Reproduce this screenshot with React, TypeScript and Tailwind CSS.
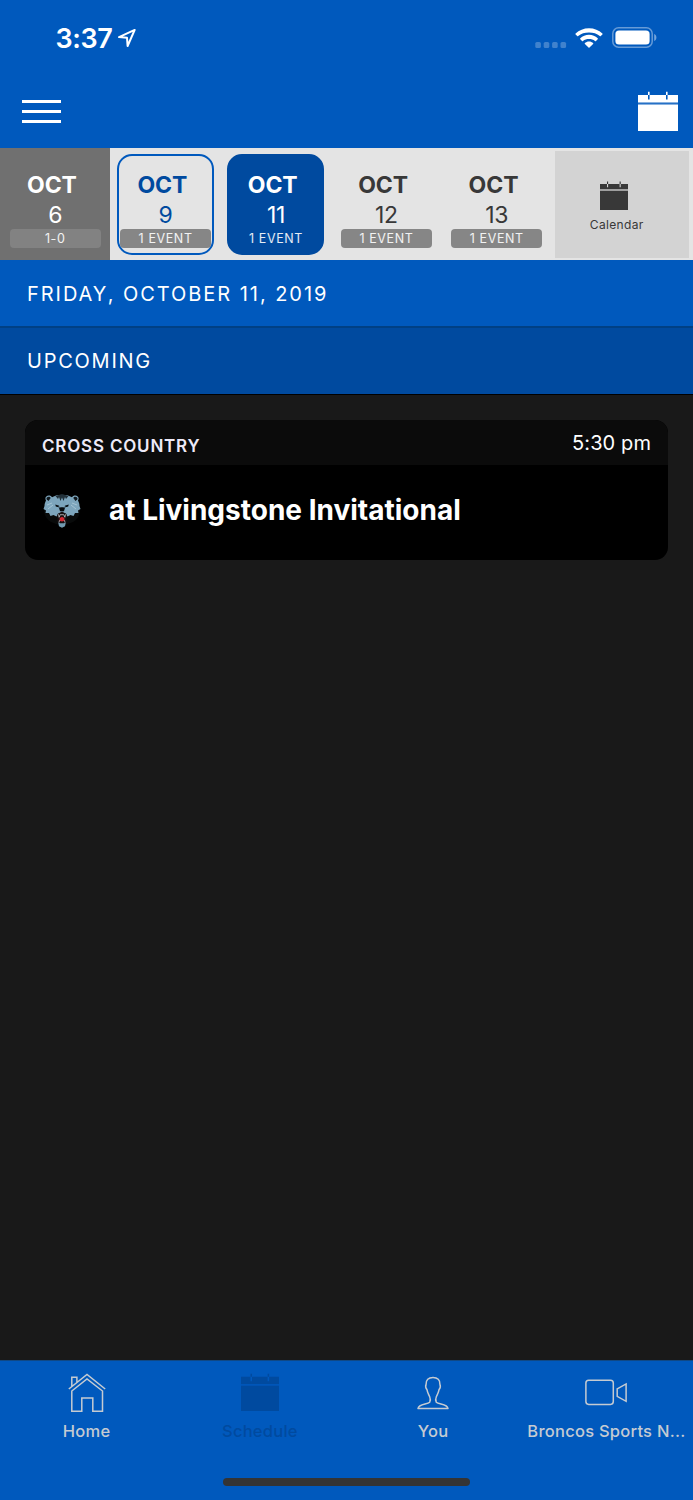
import type { ReactNode } from "react";
import clsx from "clsx";

type DayState = "past" | "today" | "selected" | "upcoming";

const days: { day: string; label: string; state: DayState }[] = [
  { day: "6", label: "1-0", state: "past" },
  { day: "9", label: "1 EVENT", state: "today" },
  { day: "11", label: "1 EVENT", state: "selected" },
  { day: "12", label: "1 EVENT", state: "upcoming" },
  { day: "13", label: "1 EVENT", state: "upcoming" },
];

const CalendarIcon = ({ className }: { className: string }) => (
  <svg viewBox="0 0 40 40" preserveAspectRatio="none" className={className} fill="currentColor">
    <path d="M0 4h10v4.600h1.600V4H28v4.600h1.600V4H40v7.500H0zM0 13.500h40V40H0z" />
    <path d="M10 .8h1.600V4H10zM28 .8h1.600V4H28z" />
    <path d="M0 11.500h40v2H0z" fillOpacity="0.15" />
  </svg>
);

const LocationIcon = () => (
  <svg viewBox="0 0 20 20" className="h-5 w-5" fill="none" stroke="currentColor" strokeWidth="2" strokeLinejoin="round">
    <path d="M17.700 1.900 2 9.100l8 .7.600 8.200z" />
  </svg>
);

const SignalDots = () => (
  <svg viewBox="0 0 32 6" className="h-1.5 w-8 text-white/25" fill="currentColor">
    <rect x="0.3" width="5.6" height="6" rx="1.6" />
    <rect x="8.7" width="5.6" height="6" rx="1.6" />
    <rect x="17.1" width="5.6" height="6" rx="1.6" />
    <rect x="25.5" width="5.6" height="6" rx="1.6" />
  </svg>
);

const WifiIcon = () => (
  <svg viewBox="0 0 28 20" className="h-5 w-7" fill="currentColor">
    <path d="M14 .2C8.8.2 4.100 2.200.6 5.500c-.3.300-.3.700 0 1L2.200 8.100c.3.300.7.300 1 0C6 5.400 9.800 4.400 14 4.400s8 1 10.800 3.700c.3.300.7.300 1 0l1.600-1.600c.3-.3.300-.7 0-1C23.900 2.200 19.200.2 14 .2z" />
    <path d="M14 6.800c-3.400 0-6.400 1.300-8.700 3.400-.3.300-.3.700 0 1l1.700 1.700c.3.300.7.300 1 0 1.600-1.400 3.700-1.900 6-1.900s4.400.5 6 1.900c.3.300.7.300 1 0l1.700-1.700c.3-.3.300-.7 0-1C20.400 8.100 17.400 6.800 14 6.800z" />
    <path d="M14 13.400c-1.600 0-3 .6-4.100 1.500-.3.300-.3.700 0 1l3.600 3.600c.3.300.7.300 1 0l3.600-3.600c.3-.3.300-.7 0-1-1.100-.9-2.500-1.500-4.100-1.500z" />
  </svg>
);

const BatteryIcon = () => (
  <svg viewBox="0 0 45 21" className="h-[21px] w-[45px]">
    <rect x="0.8" y="0.8" width="39.4" height="19.4" rx="5.800" fill="none" stroke="#fff" strokeOpacity="0.4" strokeWidth="1.5" />
    <rect x="3.4" y="3.400" width="34.200" height="14.200" rx="3.600" fill="#fff" />
    <path d="M42.200 7v7c1.300-.5 2.200-1.900 2.200-3.500S43.500 7.500 42.200 7z" fill="#fff" fillOpacity="0.45" />
  </svg>
);

const BearLogo = () => (
  <svg viewBox="0 0 38 34" className="h-[34px] w-[38px]">
    <path d="M1 16c0 8 6 14 18 15 12-1 18-7 18-15z" fill="#080a0a" />
    <path d="M3 6.500C1.500 4 3 1.500 5.800 1.500c1.500 0 2.500.6 3.200 1.700C12 1.500 15 .7 19 .7s7 .8 10 2.500c.7-1.100 1.700-1.700 3.200-1.700C35 1.500 36.500 4 35 6.500c1 2 1.500 3.500 1.500 5.500l1 3-2.500 1.500.5 2.500-3.500 0-1.500 3-3-1-3 1.500-2-3h-7l-2 3-3-1.500-3 1L6 19l-3.500 0 .5-2.500L.5 15l1-3c0-2 .5-3.500 1.500-5.500z" fill="#7da5bc" />
    <path d="M3.700 5.600c-.8-1.500.2-2.900 2-2.900 1 0 1.600.5 2 1.300L5.500 7zM34.300 5.600c.8-1.500-.2-2.900-2-2.900-1 0-1.600.5-2 1.300L32.500 7z" fill="#10181d" />
    <path d="m12.500 2 4-1.300h5l4 1.300-2.500 3-1-2-1.500 4L19 3.500 17.500 7 16 3l-1 2z" fill="#22313a" />
    <path d="m12.300 10.500 3.900 1.300-.7 1.500-2.700-.8zM25.700 10.500l-3.900 1.300.7 1.500 2.700-.8z" fill="#05090c" />
    <path d="m15.500 12 2 4m5-4-2 4" stroke="#2d414e" strokeWidth="1" fill="none" />
    <path d="m4 11 5-2m-4 6 5-4m24 0-5-2m4 6-5-4" stroke="#a9c6d6" strokeWidth="0.900" fill="none" />
    <path d="m16.300 14.300 1.200-1h3l1.200 1-.7 3h-4z" fill="#080b0e" />
    <path d="m14.500 20 4.500-2.500 4.500 2.500v8L21 31h-4l-2.500-3z" fill="#171012" />
    <path d="m15.500 20.300.6 3 1.100-2.600h3.600l1.100 2.600.6-3M16 28.500l.5-2.200h5l.5 2.200" stroke="#d5dbde" strokeWidth="0.700" fill="none" />
    <path d="m16.700 24 2.300-1.300 2.300 1.300v2.700l-2.300.9-2.300-.9z" fill="#d32832" />
    <path d="m15.200 28.500 2 .8h3.600l2-.8-.8 3.700-3 1.600-3-1.600z" fill="#7199af" />
  </svg>
);

const HomeIcon = () => (
  <svg viewBox="0 0 40 40" className="h-10 w-10" fill="none" stroke="currentColor" strokeWidth="1.5">
    <path d="M1.800 17 20 2.400 38.200 17M4.800 14.600V5.300h5.100v5.200M4.800 19v20.300h10V26h11v13.300h9.700V19L20 6.900z" />
  </svg>
);

const PersonIcon = () => (
  <svg viewBox="0 0 32 34" className="mt-0.5 h-[34px] w-8" fill="none" stroke="currentColor" strokeWidth="1.500" strokeLinejoin="round">
    <path d="M16 1.500c-4.700 0-7 2.600-6.900 6.700-.7 1.600-.3 4 .9 5.500.4 3 1.500 4.400 2.600 6.800.9 2 .9 4.100.1 5.700-2.200 2.400-11 1.600-11.700 6.300h30c-.7-4.700-9.500-3.900-11.700-6.300-.8-1.600-.8-3.700.1-5.700 1.100-2.400 2.200-3.800 2.600-6.800 1.200-1.500 1.600-3.900.9-5.500.1-4.100-2.200-6.700-6.900-6.700z" />
  </svg>
);

const VideoIcon = () => (
  <svg viewBox="0 0 42 27" className="mt-px h-[27px] w-[42px]" fill="none" stroke="currentColor" strokeWidth="1.500">
    <rect x="0.900" y="1.200" width="27.400" height="24.200" rx="2.800" />
    <path d="m32.200 9.800 8.900-4.900v17.400l-8.900-4.900z" />
  </svg>
);

const DayCell = ({ day, label, state }: (typeof days)[number]) => (
  <div className={clsx("flex w-[110.4px] shrink-0 justify-center pt-[6px]", state === "past" && "bg-[#707070]")}>
    <div
      className={clsx(
        "flex h-[101px] w-[97px] flex-col items-center rounded-[15px] border-2 pt-[15.5px]",
        state === "past" && "border-transparent text-white",
        state === "today" && "border-[#0059bd] text-[#004a9f]",
        state === "selected" && "border-[#004a9f] bg-[#004a9f] text-white",
        state === "upcoming" && "border-transparent text-[#383838]",
      )}
    >
      <span className="mr-[6.5px] text-[23px] leading-[28px] font-bold tracking-[-0.1px]">OCT</span>
      <span className="mt-[2px] text-[23px] leading-[28px] tracking-[-0.3px]">{day}</span>
      <span
        className={clsx(
          "h-[19px] w-[91px] shrink-0 rounded-[4px] text-center text-[12.5px] leading-[19px] tracking-[0.6px] text-white/90",
          state === "past" && "bg-[#828282]",
          (state === "today" || state === "upcoming") && "bg-[#868686]",
        )}
      >
        {label}
      </span>
    </div>
  </div>
);

const Tab = ({ icon, label, active }: { icon: ReactNode; label: string; active?: boolean }) => (
  <div className={clsx("flex min-w-0 flex-col items-center", active ? "text-[#004a9f]" : "text-[#c5cbd2]")}>
    <div className="flex h-[40px] items-center">{icon}</div>
    <span className="mt-[9px] text-[16.5px] leading-5 font-medium tracking-[0.25px] whitespace-nowrap">{label}</span>
  </div>
);

export default function App() {
  return (
    <div className="flex h-[1500px] w-[693px] flex-col overflow-hidden bg-[#191919] font-['Inter',sans-serif] text-white">
      <header className="h-[147.5px] shrink-0 bg-[#0059bd]">
        <div className="flex h-[75px] items-center justify-between pr-[36.5px] pl-[55.5px]">
          <div className="flex items-center gap-[5px]">
            <span className="pt-[2px] text-[27px] leading-8 font-semibold tracking-[-0.4px]">3:37</span>
            <LocationIcon />
          </div>
          <div className="flex items-center gap-[8.5px]">
            <div className="pt-[14px]">
              <SignalDots />
            </div>
            <WifiIcon />
            <BatteryIcon />
          </div>
        </div>
        <div className="flex h-[72px] items-center justify-between pr-[15px] pl-[22px]">
          <div className="flex w-[39px] flex-col gap-[7px]">
            <div className="h-[3px] bg-white" />
            <div className="h-[3px] bg-white" />
            <div className="h-[3px] bg-white" />
          </div>
          <CalendarIcon className="h-10 w-10" />
        </div>
      </header>

      <div className="flex h-[112px] shrink-0 bg-[#e4e4e4]">
        {days.map((item) => (
          <DayCell key={item.day} {...item} />
        ))}
        <div className="mt-[3px] mr-[4px] mb-[2px] ml-[3.5px] flex flex-1 flex-col items-center bg-[#d3d3d3] pt-[30px] pr-[16px] text-[#383838]">
          <CalendarIcon className="h-[29px] w-[28px]" />
          <span className="mt-[7px] ml-[5px] text-[12px] leading-4 tracking-[0.35px]">Calendar</span>
        </div>
      </div>

      <div className="flex h-[68px] shrink-0 items-center border-b-2 border-[#004084] bg-[#0059bd] pt-[2px] pl-[27px] text-[20px] tracking-[1.95px]">
        FRIDAY, OCTOBER 11, 2019
      </div>
      <div className="flex h-[67px] shrink-0 items-center border-b border-black bg-[#004a9f] pt-px pl-[27px] text-[20px] tracking-[1.75px]">
        UPCOMING
      </div>

      <main className="flex-1 px-[25px] pt-[25.5px]">
        <section className="h-[140px] overflow-hidden rounded-[13px] bg-black">
          <div className="flex h-[45px] items-center justify-between bg-[#0b0b0b] pr-[17px] pl-[17px]">
            <span className="pt-[8px] text-[17px] font-semibold tracking-[0.8px] text-[#eeeaf8]">CROSS COUNTRY</span>
            <span className="pt-px text-[20px] tracking-[0.1px]">5:30 pm</span>
          </div>
          <div className="flex h-[95px] items-center pb-[3px] pl-[18px]">
            <BearLogo />
            <h2 className="ml-[28px] pb-[2px] text-[28px] font-bold">at Livingstone Invitational</h2>
          </div>
        </section>
      </main>

      <nav className="h-[140px] shrink-0 border-t border-[#104884] bg-[#0059bd] pt-[11px]">
        <div className="grid grid-cols-4">
          <Tab icon={<HomeIcon />} label="Home" />
          <Tab icon={<CalendarIcon className="h-[38px] w-[38px]" />} label="Schedule" active />
          <Tab icon={<PersonIcon />} label="You" />
          <Tab icon={<VideoIcon />} label="Broncos Sports N..." />
        </div>
        <div className="mx-auto mt-[37px] h-2 w-[247px] rounded-full bg-[#343434]" />
      </nav>
    </div>
  );
}
